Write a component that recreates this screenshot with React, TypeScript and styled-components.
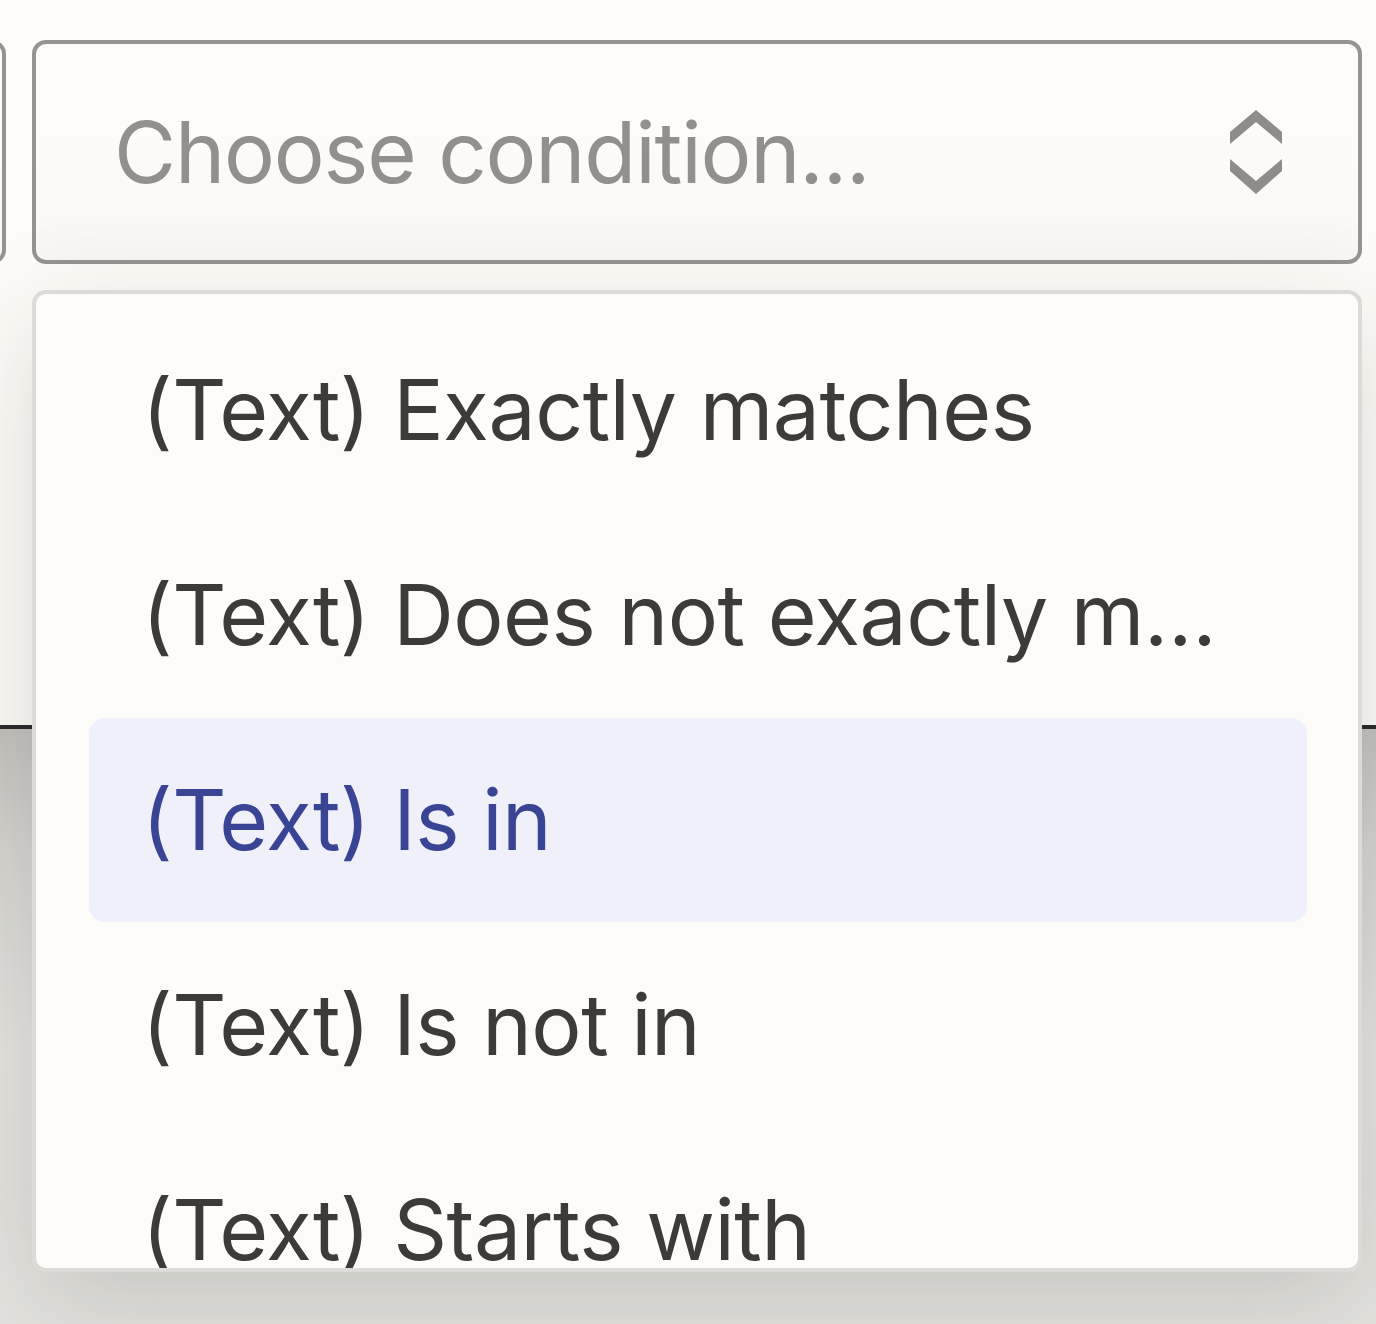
import styled, { createGlobalStyle } from "styled-components";

const GlobalStyle = createGlobalStyle`
  html, body {
    margin: 0;
    padding: 0;
    background: #fdfcf8;
    font-family: Inter, "Noto Sans", "Liberation Sans", sans-serif;
  }
  #root {
    min-height: 1324px;
    display: flex;
    flex-direction: column;
    overflow: hidden;
  }
`;

const options = [
  "(Text) Exactly matches",
  "(Text) Does not exactly match",
  "(Text) Is in",
  "(Text) Is not in",
  "(Text) Starts with",
];

const Top = styled.div`
  height: 725px;
  padding-top: 40px;
  box-sizing: border-box;
  position: relative;
  z-index: 1;
`;

const Row = styled.div`
  display: flex;
  gap: 26px;
  margin-left: -200px;
`;

const SelectBox = styled.div<{ $width: number }>`
  width: ${({ $width }) => $width}px;
  height: 224px;
  box-sizing: border-box;
  border: 4px solid #959490;
  border-radius: 14px;
  background: linear-gradient(180deg, #fdfcf8 40%, #f8f7f3 100%);
  display: flex;
  align-items: center;
  padding: 0 76px 0 78px;
  flex-shrink: 0;
`;

const Placeholder = styled.span`
  flex: 1;
  font-size: 85px;
  color: #91908c;
  letter-spacing: -1.2px;
  white-space: nowrap;
`;

const Field = styled.div`
  position: relative;
`;

const Menu = styled.ul`
  position: absolute;
  left: 0;
  top: calc(100% + 26px);
  width: 1330px;
  height: 982px;
  box-sizing: border-box;
  margin: 0;
  padding: 14px 51px 0 53px;
  list-style: none;
  border: 4px solid #dcdbd7;
  border-radius: 14px;
  background: #fdfcf8;
  overflow: hidden;
  box-shadow: 0 30px 110px rgba(40, 38, 30, 0.16);
`;

const Option = styled.li<{ $active?: boolean }>`
  display: block;
  height: 204px;
  margin-bottom: 1px;
  padding: 0 56px 0 53px;
  border-radius: 16px;
  font-size: 84px;
  line-height: 204px;
  letter-spacing: -0.5px;
  color: ${({ $active }) => ($active ? "#3a4494" : "#3d3b39")};
  background: ${({ $active }) => ($active ? "#eff0fa" : "transparent")};
  white-space: nowrap;
  overflow: hidden;
  text-overflow: ellipsis;
`;

const Band = styled.div`
  flex: 1;
  border-top: 4px solid #2b2b2b;
  background: linear-gradient(180deg, #c3c2be 0, #d6d5d1 120px, #e6e5e1 320px, #e4e3df 100%);
`;

const Chevrons = () => (
  <svg width="52" height="84" viewBox="0 0 52 84" fill="#8f8d89">
    <polygon points="0,22 26,0 52,22 52,34 26,12 0,34" />
    <polygon points="0,49 26,71 52,49 52,61 26,84 0,61" />
  </svg>
);

export default function App() {
  return (
    <>
      <GlobalStyle />
      <Top>
        <Row>
          <SelectBox $width={206} />
          <Field>
            <SelectBox $width={1330}>
              <Placeholder>Choose condition...</Placeholder>
              <Chevrons />
            </SelectBox>
            <Menu>
              {options.map((label, i) => (
                <Option key={label} $active={i === 2}>
                  {label}
                </Option>
              ))}
            </Menu>
          </Field>
        </Row>
      </Top>
      <Band />
    </>
  );
}
